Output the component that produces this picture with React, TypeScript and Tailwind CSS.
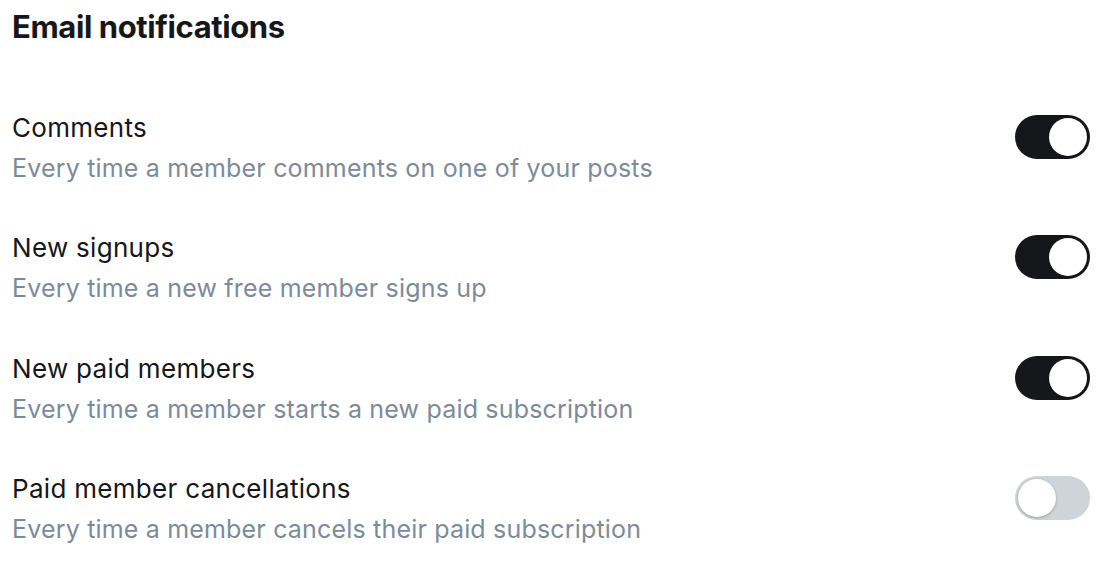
import React from "react";

const rows = [
  { title: "Comments", desc: "Every time a member comments on one of your posts", on: true },
  { title: "New signups", desc: "Every time a new free member signs up", on: true },
  { title: "New paid members", desc: "Every time a member starts a new paid subscription", on: true },
  { title: "Paid member cancellations", desc: "Every time a member cancels their paid subscription", on: false },
];

function Toggle({ on }: { on: boolean }) {
  return (
    <div
      className={`flex h-[44px] w-[75px] items-center rounded-full p-[3px] ${
        on ? "justify-end bg-[#15171a]" : "justify-start bg-[#ced4d9]"
      }`}
    >
      <div className="h-[38px] w-[38px] rounded-full bg-white shadow-[0_1px_3px_rgba(0,0,0,0.25)]" />
    </div>
  );
}

export default function App() {
  return (
    <div
      className="w-[1102px] h-[574px] bg-white pl-[12px] pr-[12px] pt-[8px]"
      style={{ fontFamily: "Inter, 'Noto Sans', sans-serif" }}
    >
      <h1 className="text-[31px] font-bold leading-[38px] tracking-[-0.4px] text-[#15171a]">
        Email notifications
      </h1>
      <div className="mt-[64px] flex flex-col gap-[44.4px]">
        {rows.map((r) => (
          <div key={r.title} className="flex items-start justify-between">
            <div className="flex flex-col gap-[4px]">
              <div className="text-[26px] font-normal leading-[36px] text-[#15171a] tracking-[0.3px]">{r.title}</div>
              <div className="text-[25px] leading-[36px] text-[#7c8b9a] tracking-[0.18px]">{r.desc}</div>
            </div>
            <div className="mt-[5px]">
              <Toggle on={r.on} />
            </div>
          </div>
        ))}
      </div>
    </div>
  );
}
